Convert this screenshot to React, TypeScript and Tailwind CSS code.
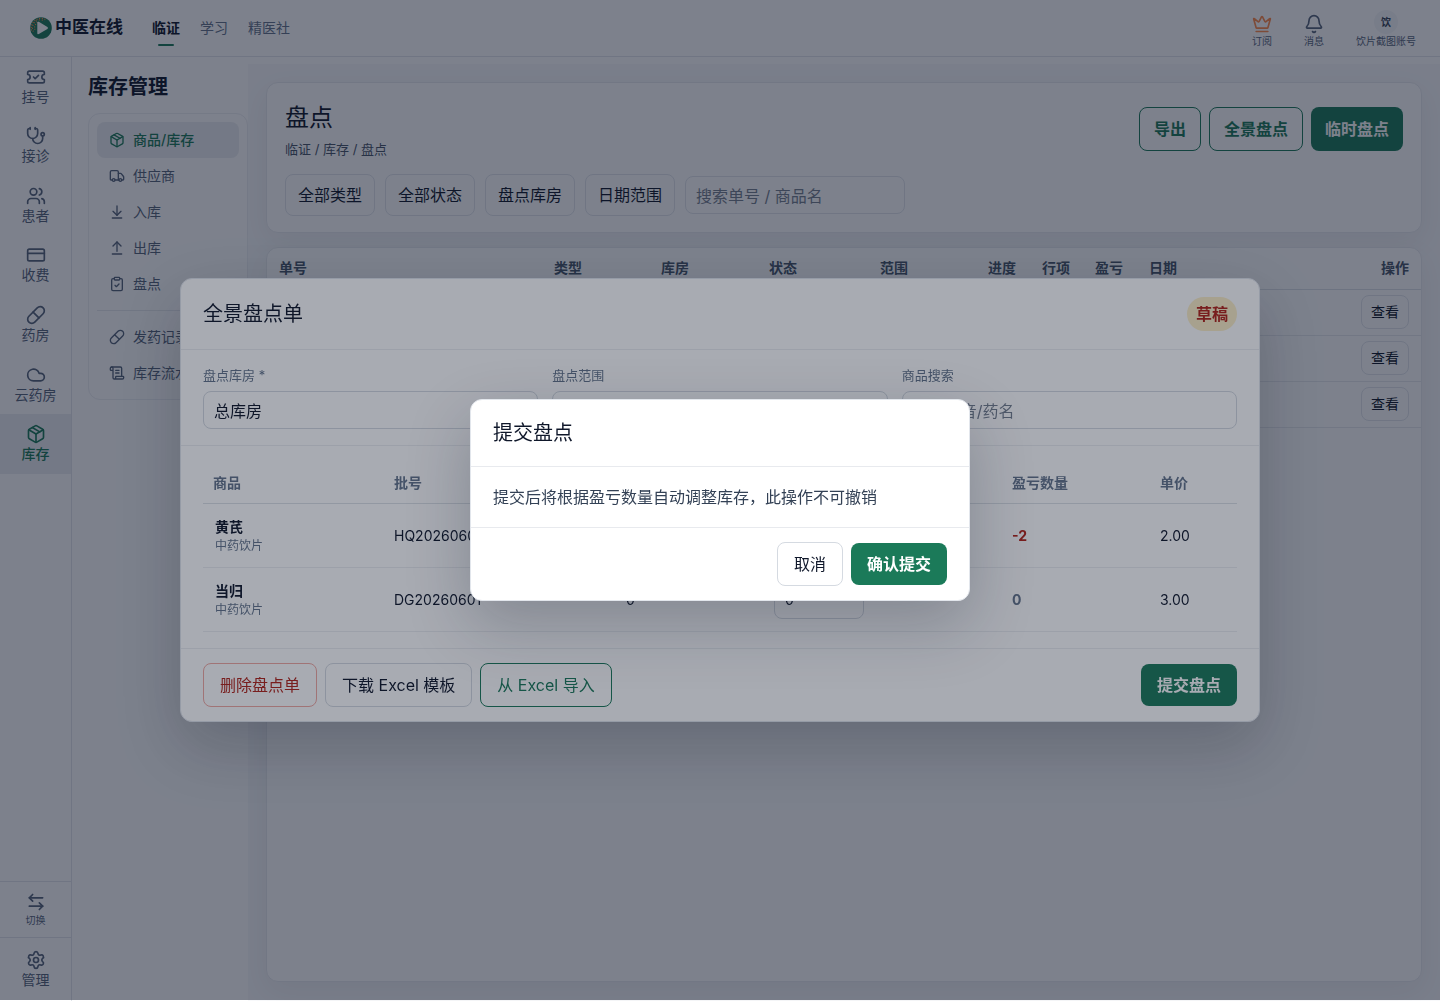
import { useState } from 'react';
import type { ReactNode } from 'react';
import {
  ArrowDownToLine,
  ArrowLeftRight,
  ArrowUpFromLine,
  Bell,
  ClipboardCheck,
  Cloud,
  CreditCard,
  Crown,
  Package,
  Pill,
  ScrollText,
  Settings,
  Stethoscope,
  TicketCheck,
  Truck,
  Users,
} from 'lucide-react';
import type { LucideIcon } from 'lucide-react';
import { clsx } from 'clsx';

interface NavItem {
  label: string;
  icon: LucideIcon;
  active?: boolean;
}

const RAIL: NavItem[] = [
  { label: '挂号', icon: TicketCheck },
  { label: '接诊', icon: Stethoscope },
  { label: '患者', icon: Users },
  { label: '收费', icon: CreditCard },
  { label: '药房', icon: Pill },
  { label: '云药房', icon: Cloud },
  { label: '库存', icon: Package, active: true },
];

const STOCK_NAV: NavItem[] = [
  { label: '商品/库存', icon: Package, active: true },
  { label: '供应商', icon: Truck },
  { label: '入库', icon: ArrowDownToLine },
  { label: '出库', icon: ArrowUpFromLine },
  { label: '盘点', icon: ClipboardCheck },
];

const RECORD_NAV: NavItem[] = [
  { label: '发药记录', icon: Pill },
  { label: '库存流水', icon: ScrollText },
];

const FILTERS = ['全部类型', '全部状态', '盘点库房', '日期范围'];

const COLUMNS = [
  { label: '单号', width: 'w-[275px]' },
  { label: '类型', width: 'w-[107px]' },
  { label: '库房', width: 'w-[108px]' },
  { label: '状态', width: 'w-[111px]' },
  { label: '范围', width: 'w-[108px]' },
  { label: '进度', width: 'w-[54px]' },
  { label: '行项', width: 'w-[53px]' },
  { label: '盈亏', width: 'w-[54px]' },
  { label: '日期', width: '' },
];

const LINES = [
  { name: '黄芪', kind: '中药饮片', batch: 'HQ20260601', book: 2, counted: '0', diff: -2, price: '2.00' },
  { name: '当归', kind: '中药饮片', batch: 'DG20260601', book: 0, counted: '0', diff: 0, price: '3.00' },
];

const FIELD = 'h-[38px] w-full appearance-none rounded-lg border border-[#d5dae1] bg-white px-2.5 pt-0.5 text-base text-[#0f172a] placeholder:text-[#757f8f]';

function Logo() {
  return (
    <svg viewBox="0 0 22 22" className="size-[22px]" aria-hidden="true">
      <circle cx="11" cy="11" r="10.8" fill="#1b7a59" />
      <g fill="none" stroke="#ff8a4a" strokeWidth="1.1">
        <path d="M1.6 13.5A9.6 9.6 0 0 1 15.5 2.6" strokeDasharray="1.1 1.5" />
        <path d="M3.4 14.6A8 8 0 0 1 14.6 4" strokeDasharray="1 1.9" />
        <path d="M5 12.8A6.3 6.3 0 0 1 8 5.2" strokeDasharray="1.1 1.3" />
      </g>
      <path d="M7.3 5.6c0-.8.8-1.2 1.5-.8l8.6 5.3c.7.4.7 1.4 0 1.8l-8.6 5.2c-.7.4-1.5 0-1.5-.8Z" fill="#fff" />
    </svg>
  );
}

function TopBar() {
  return (
    <header className="flex h-[57px] items-center justify-between border-b border-[#e2e6eb] pr-6 pl-[30px]">
      <div className="flex items-center">
        <a href="#" className="flex items-center gap-[3px] text-[17px] font-bold">
          <Logo />
          中医在线
        </a>
        <nav className="ml-[29px] flex gap-5 text-sm text-[#64748b]">
          <a href="#" className="relative font-bold text-[#0f172a]">
            临证
            <span className="absolute -bottom-2 left-1.5 h-0.5 w-4 rounded-full bg-[#1b7a59]" />
          </a>
          <a href="#">学习</a>
          <a href="#">精医社</a>
        </nav>
      </div>
      <div className="flex items-end gap-8 pt-0.5 text-[10px] leading-[14px] text-[#55637a]">
        <button className="flex flex-col items-center">
          <Crown size={20} className="text-[#ff8a4a]" />
          订阅
        </button>
        <button className="flex flex-col items-center">
          <Bell size={20} />
          消息
        </button>
        <button className="flex flex-col items-center">
          <span className="flex size-6 items-center justify-center rounded-full bg-[#f5f6f8] font-bold text-[#334155]">
            饮
          </span>
          饮片截图账号
        </button>
      </div>
    </header>
  );
}

function Rail() {
  return (
    <nav className="flex w-[72px] shrink-0 flex-col border-r border-[#e2e6eb] text-sm leading-5 text-[#55637a]">
      <div className="grid h-[417px] grid-rows-7">
        {RAIL.map(({ label, icon: Icon, active }) => (
          <a
            key={label}
            href="#"
            className={clsx(
              'flex flex-col items-center justify-center',
              active && 'bg-[#eceef1] font-medium text-[#1b7a59]'
            )}
          >
            <Icon size={20} />
            {label}
          </a>
        ))}
      </div>
      <button className="mt-auto flex h-14 flex-col items-center justify-center border-t border-[#e2e6eb] text-[10px] leading-4">
        <ArrowLeftRight size={20} />
        切换
      </button>
      <button className="flex h-16 flex-col items-center justify-center border-t border-[#e2e6eb]">
        <Settings size={20} />
        管理
      </button>
    </nav>
  );
}

function SideLinks({ items }: { items: NavItem[] }) {
  return items.map(({ label, icon: Icon, active }) => (
    <a
      key={label}
      href="#"
      className={clsx(
        'flex h-9 items-center gap-2 rounded-lg px-3',
        active && 'bg-[#eceef1] font-medium text-[#1b7a59]'
      )}
    >
      <Icon size={16} />
      {label}
    </a>
  ));
}

function SideNav() {
  return (
    <aside className="w-[176px] shrink-0 pt-4 pl-4">
      <h2 className="text-xl leading-7 font-bold">库存管理</h2>
      <nav className="mt-3 rounded-xl border border-[#edeff3] p-2 text-sm text-[#55637a]">
        <SideLinks items={STOCK_NAV} />
        <hr className="my-2 border-[#e8eaee]" />
        <SideLinks items={RECORD_NAV} />
      </nav>
    </aside>
  );
}

function StockTakeHeader() {
  return (
    <section className="rounded-xl border border-[#e8eaee] bg-white px-[18px] py-4 shadow-[0_10px_30px_rgba(15,23,42,0.06)]">
      <div className="flex items-center justify-between">
        <div>
          <h1 className="text-2xl leading-[38px]">盘点</h1>
          <p className="mt-0.5 text-[13px] leading-5 text-[#475569]">临证 / 库存 / 盘点</p>
        </div>
        <div className="flex gap-2 font-bold">
          <button className="h-11 rounded-lg border border-[#1b7a59] px-3.5 text-[#1b7a59]">导出</button>
          <button className="h-11 rounded-lg border border-[#1b7a59] px-3.5 text-[#1b7a59]">全景盘点</button>
          <button className="h-11 rounded-lg bg-[#1b7a59] px-3.5 text-white">临时盘点</button>
        </div>
      </div>
      <div className="mt-[15px] flex items-center gap-2.5">
        {FILTERS.map((label) => (
          <button key={label} className="h-[42px] rounded-lg border border-[#e2e6ec] px-3">
            {label}
          </button>
        ))}
        <input
          type="search"
          aria-label="搜索单号 / 商品名"
          placeholder="搜索单号 / 商品名"
          className="h-[38px] w-[220px] rounded-lg border border-[#e2e6ec] px-2.5 pt-0.5 placeholder:text-[#757f8f]"
        />
      </div>
    </section>
  );
}

function StockTakeTable() {
  return (
    <section className="mt-3.5 grow overflow-hidden rounded-xl border border-[#e8eaee] bg-white shadow-[0_10px_30px_rgba(15,23,42,0.06)]">
      <table className="w-full table-fixed text-sm">
        <thead>
          <tr className="h-[41px] border-b border-[#dde1e7] text-left text-[#475569]">
            {COLUMNS.map((c) => (
              <th key={c.label} className={clsx('px-3 font-bold whitespace-nowrap', c.width)}>
                {c.label}
              </th>
            ))}
            <th className="w-[110px] px-3 text-right font-bold">操作</th>
          </tr>
        </thead>
        <tbody>
          {[1, 2, 3].map((row) => (
            <tr key={row} className="h-[46px] border-b border-[#e8eaee]">
              <td colSpan={COLUMNS.length} />
              <td className="px-3 text-right">
                <button className="h-[34px] rounded-lg border border-[#e2e6ec] px-[9px]">查看</button>
              </td>
            </tr>
          ))}
        </tbody>
      </table>
    </section>
  );
}

function Overlay({ dim, children }: { dim: string; children: ReactNode }) {
  return <div className={clsx('fixed inset-x-0 top-0 bottom-px flex items-center justify-center', dim)}>{children}</div>;
}

function StockTakeDialog({ onSubmit }: { onSubmit: () => void }) {
  return (
    <div
      role="dialog"
      aria-labelledby="take-title"
      className="w-[1080px] max-w-full rounded-xl border border-[#e2e6ec] bg-white shadow-[0_24px_64px_rgba(15,23,42,0.24)]"
    >
      <div className="flex items-center justify-between border-b border-[#eceef1] px-[22px] py-[18px]">
        <h2 id="take-title" className="text-xl leading-[30px]">
          全景盘点单
        </h2>
        <span className="h-[34px] rounded-full bg-[#fef0c7] px-[9px] leading-[34px] font-bold text-[#b42318]">草稿</span>
      </div>

      <div className="grid grid-cols-3 gap-3.5 border-b border-[#eceef1] px-[22px] py-4 text-[13px] leading-[19px] text-[#64748b]">
        <label className="flex flex-col gap-1.5">
          盘点库房 *
          <select className={FIELD}>
            <option>总库房</option>
          </select>
        </label>
        <label className="flex flex-col gap-1.5">
          盘点范围
          <select className={FIELD}>
            <option>全部</option>
          </select>
        </label>
        <label className="flex flex-col gap-1.5">
          商品搜索
          <input type="text" placeholder="搜索拼音/药名" className={FIELD} />
        </label>
      </div>

      <div className="px-[22px] py-4">
        <table className="w-full table-fixed text-sm">
          <thead>
            <tr className="h-[42px] border-b border-[#dde1e7] text-left text-[#64748b]">
              <th className="w-[181px] px-2.5 font-bold">商品</th>
              <th className="w-[232px] px-2.5 font-bold">批号</th>
              <th className="w-[148px]" aria-label="账面数量" />
              <th className="w-[238px]" aria-label="实盘数量" />
              <th className="w-[148px] px-2.5 font-bold">盈亏数量</th>
              <th className="px-2.5 font-bold">单价</th>
            </tr>
          </thead>
          <tbody>
            {LINES.map((line) => (
              <tr key={line.batch} className="h-16 border-b border-[#eceef1]">
                <td className="px-3">
                  <div className="leading-5 font-bold">{line.name}</div>
                  <div className="text-xs leading-[17px] text-[#64748b]">{line.kind}</div>
                </td>
                <td className="px-2.5">{line.batch}</td>
                <td className="px-2.5">{line.book}</td>
                <td className="px-2.5">
                  <input
                    type="text"
                    aria-label={`${line.name} 实盘数量`}
                    defaultValue={line.counted}
                    className="block h-[38px] w-[90px] rounded-lg border border-[#d5dae1] px-2.5"
                  />
                </td>
                <td className={clsx('px-2.5 font-bold', line.diff < 0 ? 'text-[#b42318]' : 'text-[#64748b]')}>
                  {line.diff}
                </td>
                <td className="px-2.5">{line.price}</td>
              </tr>
            ))}
          </tbody>
        </table>
      </div>

      <div className="flex items-center gap-2 border-t border-[#eceef1] px-[22px] py-3.5">
        <button className="h-11 rounded-lg border border-[#f3a9a2] px-4 text-[#b42318]">删除盘点单</button>
        <button className="h-11 rounded-lg border border-[#d5dae1] px-4">下载 Excel 模板</button>
        <button className="h-11 rounded-lg border border-[#1b7a59] px-4 text-[#1b7a59]">从 Excel 导入</button>
        <button onClick={onSubmit} className="ml-auto h-[42px] rounded-lg bg-[#1b7a59] px-4 font-bold text-white">
          提交盘点
        </button>
      </div>
    </div>
  );
}

function ConfirmDialog({ onClose }: { onClose: () => void }) {
  return (
    <div
      role="alertdialog"
      aria-labelledby="confirm-title"
      className="w-[500px] max-w-full rounded-xl border border-[#e2e6ec] bg-white shadow-[0_24px_64px_rgba(15,23,42,0.24)]"
    >
      <h2 id="confirm-title" className="border-b border-[#e8eaee] px-[22px] py-[18px] text-xl leading-[30px]">
        提交盘点
      </h2>
      <p className="px-[22px] py-[18px] text-[#334155]">提交后将根据盈亏数量自动调整库存，此操作不可撤销</p>
      <div className="flex items-center justify-end gap-2 border-t border-[#e8eaee] px-[22px] py-3.5">
        <button onClick={onClose} className="h-11 rounded-lg border border-[#d5dae1] px-4">
          取消
        </button>
        <button onClick={onClose} className="h-[42px] rounded-lg bg-[#1b7a59] px-4 font-bold text-white">
          确认提交
        </button>
      </div>
    </div>
  );
}

export default function App() {
  const [confirming, setConfirming] = useState(true);

  return (
    <div
      lang="zh-CN"
      className="flex min-h-screen flex-col bg-white font-['Inter','Noto_Sans_CJK_SC',sans-serif] text-base text-[#0f172a]"
    >
      <TopBar />
      <div className="flex grow">
        <Rail />
        <SideNav />
        <main className="mt-[7px] flex min-w-0 grow flex-col bg-[#f8f9fb] px-[18px] pt-[18px] pb-[19px]">
          <StockTakeHeader />
          <StockTakeTable />
        </main>
      </div>

      <Overlay dim="bg-[#0f172a]/28">
        <StockTakeDialog onSubmit={() => setConfirming(true)} />
      </Overlay>
      {confirming && (
        <Overlay dim="bg-[#0f172a]/36">
          <ConfirmDialog onClose={() => setConfirming(false)} />
        </Overlay>
      )}
    </div>
  );
}
